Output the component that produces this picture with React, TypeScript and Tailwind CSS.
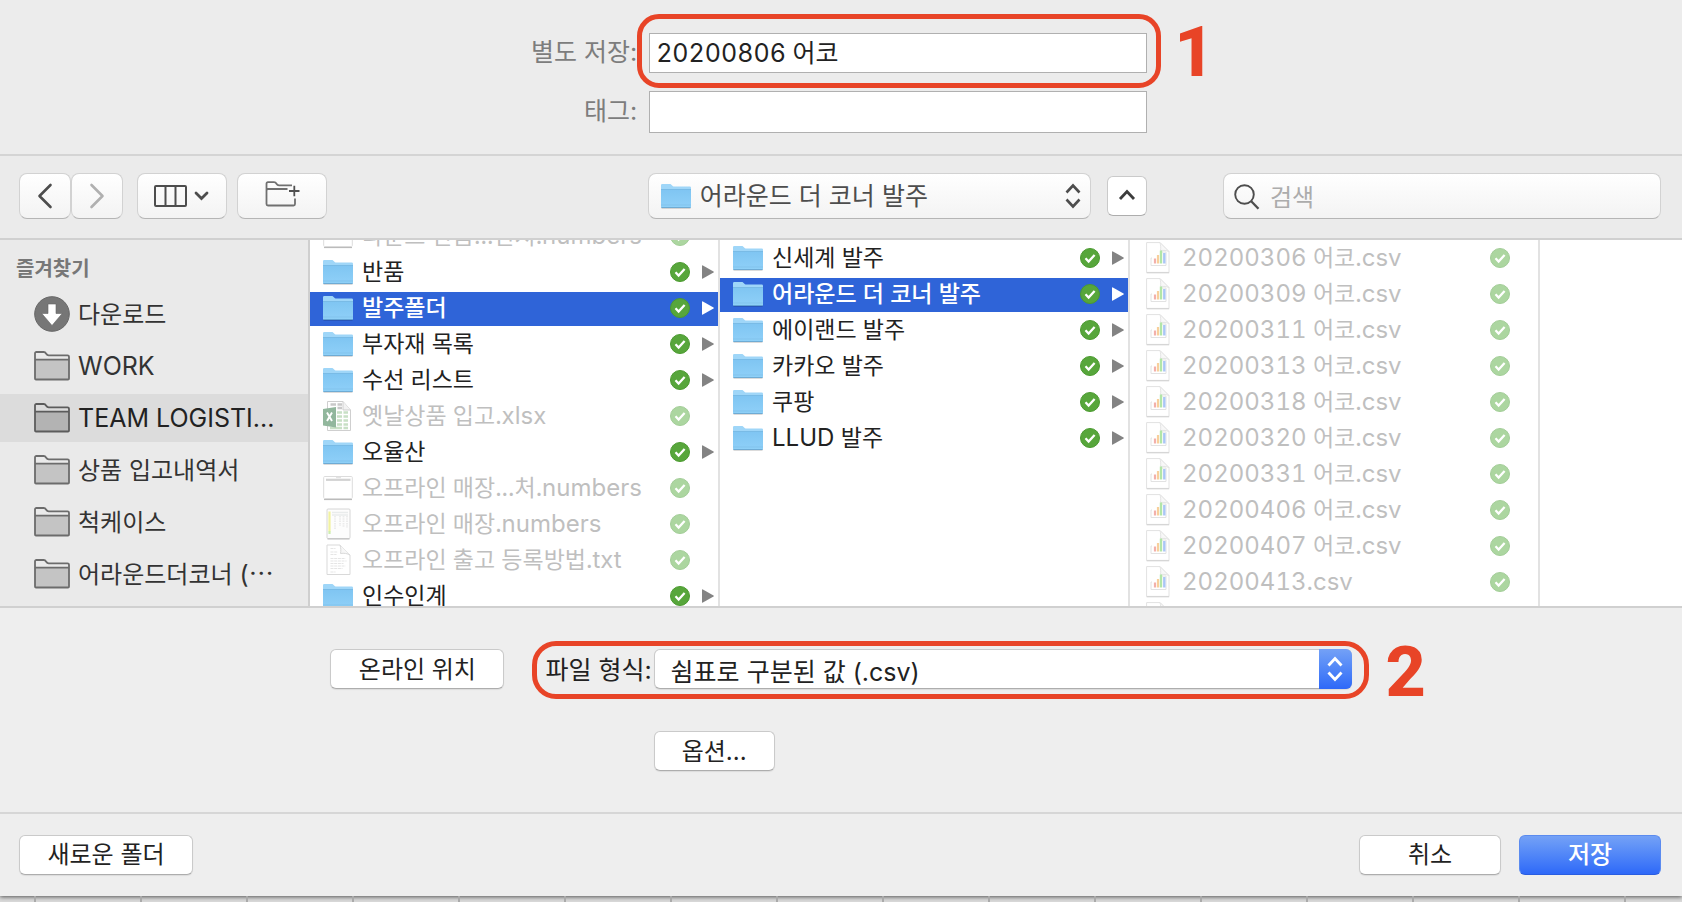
import React from "react";

type Kind = "folder" | "xlsx" | "sheet" | "table" | "text" | "csv";
type Entry = { name: string; kind: Kind; selected?: boolean };

const parentItems: Entry[] = [
  { name: "라운드 반품...현지.numbers", kind: "sheet" },
  { name: "반품", kind: "folder" },
  { name: "발주폴더", kind: "folder", selected: true },
  { name: "부자재 목록", kind: "folder" },
  { name: "수선 리스트", kind: "folder" },
  { name: "옛날상품 입고.xlsx", kind: "xlsx" },
  { name: "오율산", kind: "folder" },
  { name: "오프라인 매장...처.numbers", kind: "sheet" },
  { name: "오프라인 매장.numbers", kind: "table" },
  { name: "오프라인 출고 등록방법.txt", kind: "text" },
  { name: "인수인계", kind: "folder" },
];

const orderItems: Entry[] = [
  { name: "신세계 발주", kind: "folder" },
  { name: "어라운드 더 코너 발주", kind: "folder", selected: true },
  { name: "에이랜드 발주", kind: "folder" },
  { name: "카카오 발주", kind: "folder" },
  { name: "쿠팡", kind: "folder" },
  { name: "LLUD 발주", kind: "folder" },
];

const csvItems: Entry[] = [
  "20200306 어코.csv",
  "20200309 어코.csv",
  "20200311 어코.csv",
  "20200313 어코.csv",
  "20200318 어코.csv",
  "20200320 어코.csv",
  "20200331 어코.csv",
  "20200406 어코.csv",
  "20200407 어코.csv",
  "20200413.csv",
  "20200414.csv",
].map((name) => ({ name, kind: "csv" as Kind }));

const favorites = [
  { name: "다운로드", download: true },
  { name: "WORK" },
  { name: "TEAM LOGISTI...", selected: true },
  { name: "상품 입고내역서" },
  { name: "척케이스" },
  { name: "어라운드더코너 (⋯" },
];

/* Hangul is set one step smaller than the Latin beside it. */
function Mixed({ text, hangul }: { text: string; hangul: string }) {
  return (
    <>
      {text.split(/([\uac00-\ud7a3]+(?: [\uac00-\ud7a3]+)*)/).map((part, i) =>
        i % 2 ? (
          <span key={i} className={hangul}>
            {part}
          </span>
        ) : (
          part
        ),
      )}
    </>
  );
}

function BlueFolder() {
  return (
    <svg width="30" height="26" viewBox="0 0 30 26" className="shrink-0" aria-hidden="true">
      <defs>
        <linearGradient id="folderFront" x1="0" y1="0" x2="0" y2="1">
          <stop offset="0" stopColor="#7fc5f2" />
          <stop offset="1" stopColor="#8fd0f8" />
        </linearGradient>
      </defs>
      <path d="M0.5 25.3h29" stroke="#000" strokeOpacity=".18" />
      <path d="M0 2.2Q0 1 1.2 1h7.6c1 0 1.6.5 2.4 1.6.6.8 1 1 2 1h15.6Q30 3.600 30 4.800V8H0z" fill="#9fd6f8" />
      <path d="M0 6.400h30v17.400q0 1-1 1H1q-1 0-1-1z" fill="url(#folderFront)" />
      <path d="M0 6.500h30" stroke="#74b6e2" strokeWidth=".8" />
      <path d="M0 22h30" stroke="#7ebfe8" strokeWidth=".7" />
      <path d="M0.300 24.500h29.400" stroke="#5f9fca" strokeWidth=".8" />
    </svg>
  );
}

function GrayFolder({ dark }: { dark?: boolean }) {
  return (
    <svg width="36" height="30" viewBox="0 0 36 30" className="shrink-0" fill="none" aria-hidden="true">
      <path d="M1 9h34v18.500q0 1-1 1H2q-1 0-1-1z" fill={dark ? "#b3b3b3" : "#c4c4c4"} />
      <path
        d="M1 27.500V2.500Q1 1 2.500 1h7.200c1.300 0 1.800.5 2.500 1.700.7 1.200 1.200 1.600 2.500 1.600h18.800Q35 4.300 35 5.800v21.700q0 1-1 1H2q-1 0-1-1zM1 8.700h34"
        stroke={dark ? "#5c5c5c" : "#6c6c6c"}
        strokeWidth="1.800"
      />
    </svg>
  );
}

function DownloadIcon() {
  return (
    <svg width="36" height="36" viewBox="0 0 36 36" className="shrink-0" aria-hidden="true">
      <circle cx="18" cy="18" r="17.300" fill="#767676" stroke="#666" />
      <path d="M14 8h8v9.500h6.200L18 29.500 7.800 17.500H14z" fill="#fff" stroke="#666" strokeWidth=".6" />
    </svg>
  );
}

function DocIcon({ kind }: { kind: Kind }) {
  if (kind === "sheet")
    return (
      <svg width="30" height="26" viewBox="0 0 30 26" className="shrink-0" aria-hidden="true">
        <path d="M1 24.500h28" stroke="#bbb" strokeWidth="1.200" />
        <rect x=".7" y="1.500" width="28.600" height="22" rx="1" fill="#fff" stroke="#dcdcdc" />
        <path d="M3 4.800h24.500" stroke="#d2d2d2" strokeWidth="2.200" />
        <path d="M13 2.700h5" stroke="#ddd" />
      </svg>
    );
  if (kind === "table")
    return (
      <svg width="30" height="32" viewBox="0 0 30 32" className="shrink-0" aria-hidden="true">
        <rect x="4" y="1" width="23" height="29.500" rx="1" fill="#fdfdfd" stroke="#d6d6d6" />
        <path d="M4.500 31h22" stroke="#bbb" />
        <path d="M6.500 3.500v20" stroke="#f1f2a0" strokeWidth="2.200" />
        <path d="M6.500 23v3" stroke="#cdeeb0" strokeWidth="2.200" />
        <path d="M9 4.500h16M9 7h16" stroke="#e9ecec" strokeWidth="1.600" />
        <path d="M12 8v13M17 8v10M20.500 8v11M24 8v12" stroke="#ececec" strokeWidth="1.800" strokeDasharray="1.500 .8" />
      </svg>
    );
  if (kind === "text")
    return (
      <svg width="30" height="32" viewBox="0 0 30 32" className="shrink-0" fill="none" aria-hidden="true">
        <path d="M4 1h13l10 10v19.500H4z" fill="#fff" stroke="#d9d9d9" />
        <path d="M17 1c1 3 1 6 .5 8.500 3.500-.6 7 0 9.500 1.500" stroke="#d9d9d9" fill="#f7f7f7" />
        <path
          d="M7.500 4.500h5M7.500 8h7M7.500 10.500h6M7.500 14.500h15M7.500 17h16M7.500 19.500h13M7.500 22h15M7.500 24.500h12M7.500 28h5"
          stroke="#e2e2e2"
          strokeWidth=".9"
          strokeDasharray="3 .7"
        />
      </svg>
    );
  if (kind === "xlsx")
    return (
      <svg width="30" height="32" viewBox="0 0 30 32" className="shrink-0" fill="none" aria-hidden="true">
        <path d="M4.500 1.500H20l7.500 8.500v20.500h-23z" fill="#fff" stroke="#cfcfcf" />
        <path d="M20 1.500V10h7.500" fill="#f2f2f2" stroke="#cfcfcf" />
        <path d="M7.500 4.500H13M14.500 4.500H19M14.500 8H19" stroke="#c9c9c9" strokeWidth="2.600" />
        <path
          d="M14 12.500h5M20.500 12.500h4.500M14 16.500h5M20.500 16.500h4.500M14 20.500h5M20.500 20.500h4.500M14 24.500h5M20.500 24.500h4.500M7 28h12M20.500 28h4.500"
          stroke="#c8e0c5"
          strokeWidth="2.600"
        />
        <path d="M0 9l13-2v20.500L0 25.500z" fill="#92b79d" />
        <path d="M4 12.500l5 8.500M9 12.500L4 21" stroke="#fff" strokeWidth="1.900" />
      </svg>
    );
  return (
    <svg width="24" height="32" viewBox="0 0 24 32" className="shrink-0" fill="none" aria-hidden="true">
      <path d="M.6.6H14l9 9v20.800H.6z" fill="#fff" stroke="#e2e2e2" />
      <path d="M.6 30.800h22.600" stroke="#d0d0d0" />
      <path d="M14 .6c.8 3 .9 5.500.5 8 3-.4 6-.2 8.500 1z" fill="#f8f8f8" stroke="#e4e4e4" />
      <path d="M6 16H5v7.500h15V10h-4" stroke="#e2e2e2" />
      <path d="M9 21.500v-5" stroke="#f3b0aa" strokeWidth="2.200" />
      <path d="M12 21.500v-8.500" stroke="#f8cf9c" strokeWidth="2.200" />
      <path d="M15 21.500V8.500" stroke="#b2e6a8" strokeWidth="2.400" />
      <path d="M18.300 21.500V11" stroke="#aac6f6" strokeWidth="2.400" />
    </svg>
  );
}

function SyncBadge({ dim }: { dim: boolean }) {
  return (
    <svg width="20" height="20" viewBox="0 0 20 20" className="shrink-0" fill="none" aria-hidden="true">
      <circle cx="10" cy="10" r="9.500" fill={dim ? "#acd6a0" : "#57a63b"} stroke={dim ? "#a3cd98" : "#4b9a30"} />
      <path d="M5.500 10.300l3.100 3.200 6-6.500" stroke="#fff" strokeWidth="2.300" />
    </svg>
  );
}

function Row({ item }: { item: Entry }) {
  const folder = item.kind === "folder";
  const tone = item.selected
    ? "bg-[#2f64d8] text-white font-medium"
    : folder
      ? "text-[#222]"
      : "text-[#bfbfbf]";
  return (
    <li className="py-px">
      <button
        type="button"
        disabled={!folder}
        className={`flex h-[34px] w-full items-center pr-[4px] pb-[2px] text-left text-2xl leading-[32px] tabular-nums ${tone}`}
      >
        <span className={`flex w-[52px] shrink-0 items-center ${item.kind === "csv" ? "pl-[16px]" : "pl-[13px]"}`}>
          {folder ? <BlueFolder /> : <DocIcon kind={item.kind} />}
        </span>
        <span className="min-w-0 flex-1 whitespace-nowrap">
          <Mixed text={item.name} hangul="text-[23px]" />
        </span>
        <SyncBadge dim={!folder} />
        <span className="flex w-[24px] shrink-0 justify-end">
          {folder && (
            <svg width="12" height="14" viewBox="0 0 12 14" aria-hidden="true">
              <path
                d="M0 .8Q0 0 .9.400L11.500 6.400q.7.600 0 1.200L.9 13.600Q0 14 0 13.200z"
                fill={item.selected ? "#fff" : "#838383"}
              />
            </svg>
          )}
        </span>
      </button>
    </li>
  );
}

function Column({ items, scrolled, label }: { items: Entry[]; scrolled?: boolean; label: string }) {
  return (
    <div className="w-[410px] shrink-0 overflow-hidden border-r-2 border-[#e2e2e2]">
      <ul aria-label={label} className={scrolled ? "-mt-[21px]" : "mt-px"}>
        {items.map((item) => (
          <Row key={item.name} item={item} />
        ))}
      </ul>
    </div>
  );
}

const toolButton =
  "flex h-[46px] items-center justify-center rounded-lg border border-[#d2d2d2] border-b-[#b5b5b5] bg-linear-to-b from-white to-[#f3f3f3] text-[#4d4d4d]";
const pushButton =
  "h-[40px] rounded-md border border-[#cacaca] border-b-[#adadad] bg-white leading-[38px] text-[#222] shadow-[0_1px_1px_rgba(0,0,0,0.08)]";
const callout = "pointer-events-none border-[5px] border-[#e84427]";
const calloutNumber =
  "pointer-events-none absolute font-[Roboto,sans-serif] text-[70px] leading-[70px] font-extrabold text-[#e84427]";

function UpDown({ color, width }: { color: string; width: string }) {
  return (
    <svg width="16" height="26" viewBox="0 0 16 26" fill="none" stroke={color} strokeWidth={width} aria-hidden="true">
      <path d="M1.500 9.500L8 2.500l6.500 7M1.500 16.500l6.500 7 6.500-7" />
    </svg>
  );
}

export default function App() {
  return (
    <div className="flex h-screen w-full flex-col overflow-hidden bg-[#d9d9d9] font-[Inter,'Noto_Sans_CJK_KR',sans-serif] text-2xl">
      <form
        className="flex min-h-0 flex-1 flex-col bg-[#eee] shadow-[0_1px_4px_rgba(0,0,0,0.6)]"
        onSubmit={(e) => e.preventDefault()}
      >
        <section className="grid shrink-0 grid-cols-[38%_498px] gap-x-[10px] gap-y-[18px] border-b-2 border-[#d4d4d4] bg-[#ececec] pt-[33px] pb-[21px] text-[#7d7d7d]">
          <label htmlFor="filename" className="self-center pr-[2px] text-right text-[25px]">
            별도 저장:
          </label>
          <div className="relative">
            <input
              id="filename"
              defaultValue="20200806 어코"
              className="block h-[40px] w-full border border-[#b0b0b0] bg-white px-[6px] pb-[4px] text-[25px] text-[#222] tabular-nums outline-none"
            />
            <div className={`${callout} absolute -top-[19px] -right-[14px] -bottom-[15px] -left-[12px] rounded-[22px]`} />
            <span className={`${calloutNumber} -top-[16px] left-full ml-[27px]`}>1</span>
          </div>
          <label htmlFor="tags" className="self-center pr-[2px] text-right text-[25px]">
            태그:
          </label>
          <input
            id="tags"
            className="block h-[42px] w-full border border-[#b0b0b0] bg-white px-[6px] text-[25px] outline-none"
          />
        </section>

        <nav className="flex shrink-0 items-center border-b-2 border-[#d0d0d0] bg-[#ebebeb] pt-[17px] pr-[21px] pb-[19px]">
          <div className="flex w-[39%] shrink-0 pl-[19px]">
            <button type="button" aria-label="뒤로" className={`${toolButton} w-[52px]`}>
              <svg width="16" height="26" viewBox="0 0 16 26" fill="none" stroke="currentColor" strokeWidth="2.600" strokeLinecap="round" strokeLinejoin="round">
                <path d="M13.500 2L2.500 13l11 11" />
              </svg>
            </button>
            <button type="button" aria-label="앞으로" className={`${toolButton} w-[52px]`}>
              <svg width="16" height="26" viewBox="0 0 16 26" fill="none" stroke="#b0b0b0" strokeWidth="2.600" strokeLinecap="round" strokeLinejoin="round">
                <path d="M2.500 2l11 11-11 11" />
              </svg>
            </button>
            <button type="button" aria-label="보기 방식" className={`${toolButton} ml-[14px] w-[90px] gap-[7px] pr-[2px]`}>
              <svg width="33" height="22" viewBox="0 0 33 22" fill="none" stroke="currentColor" strokeWidth="2">
                <rect x="1" y="1" width="31" height="20" rx="1" />
                <path d="M11.500 1v20M21.500 1v20" />
              </svg>
              <svg width="15" height="10" viewBox="0 0 15 10" fill="none" stroke="currentColor" strokeWidth="2.800" strokeLinecap="round">
                <path d="M2 2l5.500 5.500L13 2" />
              </svg>
            </button>
            <button type="button" aria-label="새로운 폴더 추가" className={`${toolButton} ml-[10px] w-[90px] pb-[4px] pl-[2px]`}>
              <svg width="36" height="26" viewBox="0 0 36 26" fill="none" stroke="#707070" strokeWidth="1.800">
                <path d="M27 4.300H14c-1.500 0-1.800-.3-2.500-1.500C10.800 1.500 10.500 1.200 9 1.200H3Q1.500 1.200 1.500 2.700V23q0 1.500 1.500 1.500h25.500q1.500 0 1.500-1.500v-5.500M1.500 10V9.500Q1.500 8 3 8h19.500" />
                <path d="M24 10h10.500M29.300 4.700v10.500" stroke="#505050" />
              </svg>
            </button>
          </div>
          <div className="relative w-[443px]">
            <span className="pointer-events-none absolute top-[10px] left-[13px]">
              <BlueFolder />
            </span>
            <select
              aria-label="위치"
              className={`${toolButton} w-full appearance-none pt-[1px] pl-[51px] text-[25px] outline-none`}
            >
              <option>어라운드 더 코너 발주</option>
            </select>
            <span className="pointer-events-none absolute top-[10px] right-[10px]">
              <UpDown color="#4d4d4d" width="2.600" />
            </span>
          </div>
          <button
            type="button"
            aria-label="접기"
            className="ml-[16px] flex h-[40px] w-[40px] items-center justify-center rounded-md border border-[#cacaca] border-b-[#adadad] bg-white pb-[3px]"
          >
            <svg width="18" height="12" viewBox="0 0 18 12" fill="none" stroke="#3c3c3c" strokeWidth="2.800">
              <path d="M2 10l7-7.500L16 10" />
            </svg>
          </button>
          <div className="relative ml-auto w-[438px]">
            <svg
              width="26"
              height="26"
              viewBox="0 0 26 26"
              fill="none"
              stroke="#4d4d4d"
              strokeWidth="1.900"
              className="pointer-events-none absolute top-[11px] left-[11px]"
            >
              <circle cx="10.500" cy="10.500" r="9.300" />
              <path d="M17 17l7.500 7.800" strokeWidth="2.300" />
            </svg>
            <input
              type="text"
              aria-label="검색"
              placeholder="검색"
              className="block h-[46px] w-full rounded-lg border border-[#d2d2d2] border-b-[#b5b5b5] bg-linear-to-b from-white to-[#f3f3f3] pt-[2px] pl-[46px] outline-none placeholder:text-[#acacac]"
            />
          </div>
        </nav>

        <div className="flex min-h-0 flex-1 overflow-hidden border-b-2 border-[#d0d0d0] bg-white">
          <aside className="w-[310px] shrink-0 overflow-hidden border-r-2 border-[#cfcfcf] bg-[#eaeaea] pt-[14px]">
            <h2 className="pl-[16px] text-xl leading-[30px] font-semibold text-[#777]">즐겨찾기</h2>
            <ul className="mt-[6px] flex flex-col gap-[4px]">
              {favorites.map((f) => (
                <li key={f.name}>
                  <button
                    type="button"
                    className={`flex h-[48px] w-full items-center gap-[8px] pl-[34px] text-left text-[25px] whitespace-nowrap ${f.selected ? "bg-[#dcdcdc] text-[#222]" : "text-[#333]"}`}
                  >
                    {f.download ? <DownloadIcon /> : <GrayFolder dark={f.selected} />}
                    <span className="pt-[2px]">
                      <Mixed text={f.name} hangul="text-2xl" />
                    </span>
                  </button>
                </li>
              ))}
            </ul>
          </aside>
          <Column items={parentItems} scrolled label="상위 폴더" />
          <Column items={orderItems} label="발주폴더" />
          <Column items={csvItems} label="어라운드 더 코너 발주" />
        </div>

        <section className="grid shrink-0 grid-cols-[174px_auto_minmax(0,698px)] items-center justify-center gap-y-[42px] border-b-2 border-[#d6d6d6] pt-[41px] pb-[41px] text-[#222]">
          <button type="button" className={`${pushButton} col-start-1 row-start-1 pt-[1px]`}>
            온라인 위치
          </button>
          <label htmlFor="format" className="col-start-2 row-start-1 pt-[3px] pr-[2px] pl-[41px] text-[25px]">
            파일 형식:
          </label>
          <div className="relative col-start-3 row-start-1">
            <select
              id="format"
              className={`${pushButton} block w-full appearance-none px-[16px] pt-[3px] text-[25px] outline-none`}
            >
              <option>쉼표로 구분된 값 (.csv)</option>
            </select>
            <span className="pointer-events-none absolute top-0 right-0 flex h-[40px] w-[33px] items-center justify-center rounded-r-md bg-linear-to-b from-[#74a1f6] to-[#2e68f8]">
              <UpDown color="#fff" width="2.800" />
            </span>
            <span className={`${calloutNumber} -top-[12px] left-full ml-[34px]`}>2</span>
          </div>
          <div
            className={`${callout} col-span-2 col-start-2 row-start-1 -mt-[8px] -mr-[17px] -mb-[10px] ml-[28px] self-stretch rounded-[24px]`}
          />
          <button type="button" className={`${pushButton} col-start-3 row-start-2 w-[121px] pt-[1px]`}>
            옵션...
          </button>
        </section>

        <footer className="flex shrink-0 gap-[18px] pt-[21px] pr-[21px] pb-[21px] pl-[19px]">
          <button type="button" className={`${pushButton} mr-auto w-[174px]`}>
            새로운 폴더
          </button>
          <button type="button" className={`${pushButton} w-[142px]`}>
            취소
          </button>
          <button
            type="submit"
            className="h-[40px] w-[142px] rounded-md border border-[#5b8bef] border-b-[#2a5de0] bg-linear-to-b from-[#74a1f6] to-[#2e68f8] leading-[38px] font-medium text-white"
          >
            저장
          </button>
        </footer>
      </form>
      <div className="flex h-[6px] shrink-0 overflow-hidden">
        <div className="w-[36px] shrink-0 border-r-2 border-[#aaa]" />
        {Array.from({ length: 15 }, (_, i) => (
          <div key={i} className="w-[106px] shrink-0 border-r-2 border-[#aaa]" />
        ))}
      </div>
    </div>
  );
}
